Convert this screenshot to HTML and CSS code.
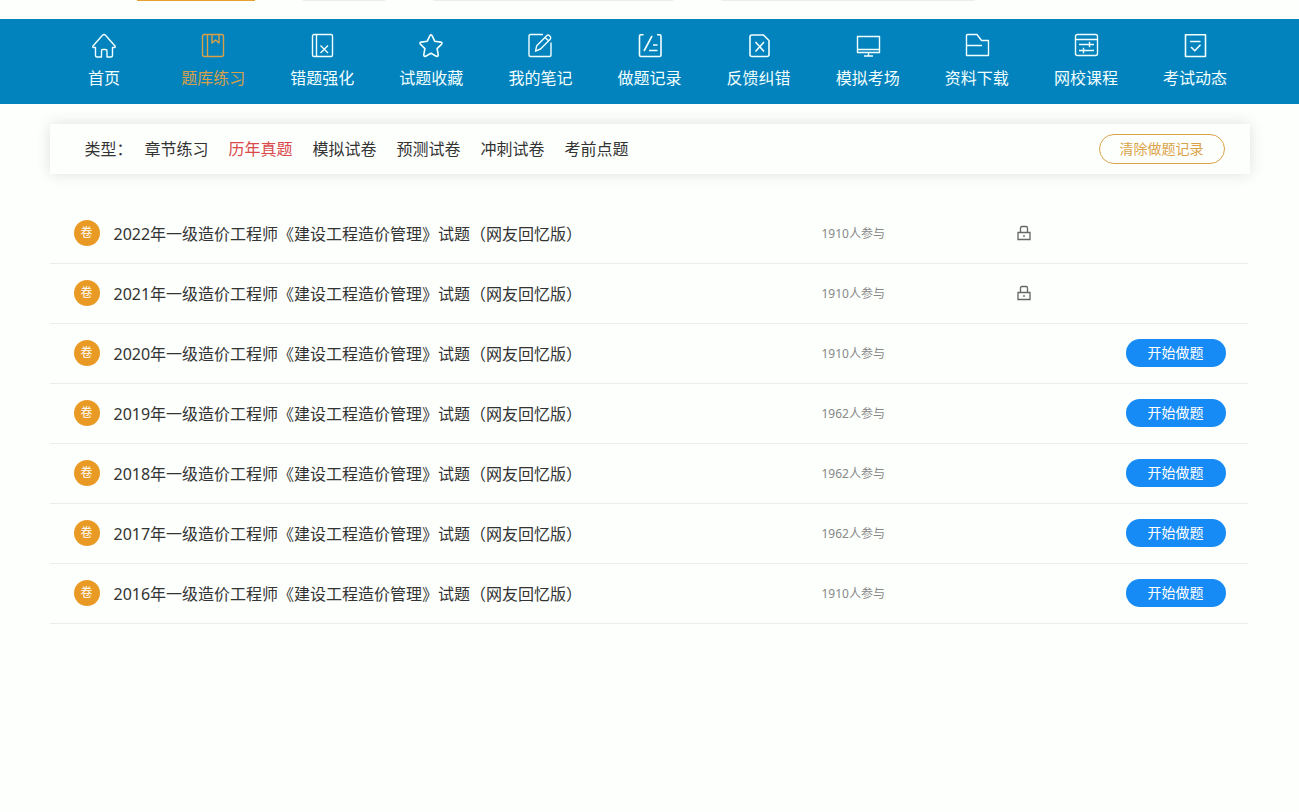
FILE: index.html
```html
<!DOCTYPE html>
<html lang="zh-CN">
<head>
<meta charset="utf-8">
<meta name="viewport" content="width=device-width, initial-scale=1">
<title>题库练习</title>
<link rel="stylesheet" href="styles.css">
</head>
<body>
<div class="top-strip">
  <div class="container top-edges">
    <span class="edge edge-active"></span>
    <span class="edge edge-small"></span>
    <span class="edge edge-medium"></span>
    <span class="edge edge-large"></span>
  </div>
</div>
<nav class="main-nav">
  <div class="container nav-list">
    <a class="nav-item" href="#"><svg class="nav-icon" viewBox="0 0 26 26"><path d="M4.500 14.500H2.800Q1 14.500 2.200 12.700L11.500 2.300Q13 .9 14.500 2.300L23.800 12.700Q25 14.500 23.200 14.500H21.500V22.500Q21.500 24 20 24H16V18Q16 16.500 14.500 16.500H11.500Q10.500 16.500 10.500 18V24H6Q4.500 24 4.500 22.500Z"/></svg><span>首页</span></a>
    <a class="nav-item active" href="#"><svg class="nav-icon" viewBox="0 0 26 26"><rect x="2.500" y="1.500" width="21" height="22" rx="2"/><path d="M7.500 1.500V23.500M12 1.500V10L15.500 7L19 10V1.500"/></svg><span>题库练习</span></a>
    <a class="nav-item" href="#"><svg class="nav-icon" viewBox="0 0 26 26"><rect x="3.500" y="1.500" width="20" height="22" rx="1.500"/><path d="M7.500 1.500V23.500M11.500 12.500L19 20M19 12.500L11.500 20"/></svg><span>错题强化</span></a>
    <a class="nav-item" href="#"><svg class="nav-icon" viewBox="0 0 26 26"><path class="bold" d="M11.800 2.800Q13 .8 14.200 2.800L16.700 8.200L22.800 9.100Q24.900 9.700 23.400 11.400L19.100 15.600L20.200 21.700Q20.300 24 18.300 23.200L13 20.300L7.700 23.200Q5.700 24 5.800 21.700L6.900 15.600L2.600 11.400Q1.100 9.700 3.200 9.100L9.300 8.200Z"/></svg><span>试题收藏</span></a>
    <a class="nav-item" href="#"><svg class="nav-icon" viewBox="0 0 26 26"><path d="M16 1.500H3.500Q2 1.500 2 3V22Q2 23.500 3.500 23.500H22.500Q24 23.500 24 22V9.500M8.500 18.200L9.700 12.800L19.700 2.700Q21 1.500 22.500 2.700L23.200 3.500Q24.400 4.900 23.200 6.200L13.500 16Z M18 4.500L21.600 7.800"/></svg><span>我的笔记</span></a>
    <a class="nav-item" href="#"><svg class="nav-icon" viewBox="0 0 26 26"><path class="bold" d="M6.500 1.800H4Q2.500 1.800 2.500 3.300V22Q2.500 23.500 4 23.500H22.500Q24 23.500 24 22V3.300Q24 1.800 22.500 1.800H20M15 3L7 18M16 12H20.500M12 17.500H20.500"/></svg><span>做题记录</span></a>
    <a class="nav-item" href="#"><svg class="nav-icon" viewBox="0 0 26 26"><path class="bold" d="M6 2H17.500L23 7.500V21.500Q23 23.500 21 23.500H6Q4 23.500 4 21.500V4Q4 2 6 2ZM9.500 9L18 18.500M18 9L9.500 18.500"/></svg><span>反馈纠错</span></a>
    <a class="nav-item" href="#"><svg class="nav-icon" viewBox="0 0 26 26"><path d="M2.500 3.500H24.500V19.500H2.500ZM2.500 16.500H24.500M13.500 19.500V22.500M9 23H18"/></svg><span>模拟考场</span></a>
    <a class="nav-item" href="#"><svg class="nav-icon" viewBox="0 0 26 26"><path d="M2.500 2.500Q2.500 1.500 3.500 1.500H13L17.500 7.500H24.500V22.500H2.500ZM2.500 12.500H18"/></svg><span>资料下载</span></a>
    <a class="nav-item" href="#"><svg class="nav-icon" viewBox="0 0 26 26"><rect x="2.500" y="1.500" width="22" height="21" rx="2"/><path d="M2.500 6.500H24.500M6 11.500H21M16.500 8.800V14.200M6 17.500H21M10.500 14.800V20.200"/></svg><span>网校课程</span></a>
    <a class="nav-item" href="#"><svg class="nav-icon" viewBox="0 0 26 26"><path class="bold" d="M3.500 1.800H23.500V23.500H3.500ZM8 8.500H18.500M9 14L12.800 17.800L18.500 11.800"/></svg><span>考试动态</span></a>
  </div>
</nav>
<main class="container">
  <section class="filter-panel">
    <span class="filter-label">类型：</span>
    <div class="filter-options">
      <a class="filter-link" href="#">章节练习</a>
      <a class="filter-link selected" href="#">历年真题</a>
      <a class="filter-link" href="#">模拟试卷</a>
      <a class="filter-link" href="#">预测试卷</a>
      <a class="filter-link" href="#">冲刺试卷</a>
      <a class="filter-link" href="#">考前点题</a>
    </div>
    <button class="clear-button" type="button">清除做题记录</button>
  </section>
  <ul class="paper-list">
    <li class="paper"><span class="badge">卷</span><a class="paper-title" href="#">2022年一级造价工程师《建设工程造价管理》试题（网友回忆版）</a><span class="paper-count">1910人参与</span><span class="paper-lock"><svg class="lock-icon" viewBox="0 0 16 16" role="img" aria-label="未解锁"><path d="M2 7.500H14V14.500H2ZM4.500 7.500V3Q4.500 1.500 6 1.500H10Q11.500 1.500 11.500 3V7.500M8 10V12"/></svg></span><span class="paper-action"></span></li>
    <li class="paper"><span class="badge">卷</span><a class="paper-title" href="#">2021年一级造价工程师《建设工程造价管理》试题（网友回忆版）</a><span class="paper-count">1910人参与</span><span class="paper-lock"><svg class="lock-icon" viewBox="0 0 16 16" role="img" aria-label="未解锁"><path d="M2 7.500H14V14.500H2ZM4.500 7.500V3Q4.500 1.500 6 1.500H10Q11.500 1.500 11.500 3V7.500M8 10V12"/></svg></span><span class="paper-action"></span></li>
    <li class="paper"><span class="badge">卷</span><a class="paper-title" href="#">2020年一级造价工程师《建设工程造价管理》试题（网友回忆版）</a><span class="paper-count">1910人参与</span><span class="paper-lock"></span><span class="paper-action"><button class="start-button" type="button">开始做题</button></span></li>
    <li class="paper"><span class="badge">卷</span><a class="paper-title" href="#">2019年一级造价工程师《建设工程造价管理》试题（网友回忆版）</a><span class="paper-count">1962人参与</span><span class="paper-lock"></span><span class="paper-action"><button class="start-button" type="button">开始做题</button></span></li>
    <li class="paper"><span class="badge">卷</span><a class="paper-title" href="#">2018年一级造价工程师《建设工程造价管理》试题（网友回忆版）</a><span class="paper-count">1962人参与</span><span class="paper-lock"></span><span class="paper-action"><button class="start-button" type="button">开始做题</button></span></li>
    <li class="paper"><span class="badge">卷</span><a class="paper-title" href="#">2017年一级造价工程师《建设工程造价管理》试题（网友回忆版）</a><span class="paper-count">1962人参与</span><span class="paper-lock"></span><span class="paper-action"><button class="start-button" type="button">开始做题</button></span></li>
    <li class="paper"><span class="badge">卷</span><a class="paper-title" href="#">2016年一级造价工程师《建设工程造价管理》试题（网友回忆版）</a><span class="paper-count">1910人参与</span><span class="paper-lock"></span><span class="paper-action"><button class="start-button" type="button">开始做题</button></span></li>
  </ul>
</main>
</body>
</html>
```
FILE: styles.css
```css
* {
  box-sizing: border-box;
}

body {
  margin: 0;
  background: #fcfffc;
  color: #333;
  font-family: "Noto Sans", "Noto Sans CJK SC", sans-serif;
  font-size: 16px;
  line-height: 24px;
}

a {
  color: inherit;
  text-decoration: none;
}

button {
  font-family: inherit;
  cursor: pointer;
}

.container {
  max-width: 1200px;
  margin: 0 auto;
}

/* Lower edges of the header controls above the navigation */
.top-strip {
  height: 19px;
}

.top-edges {
  display: flex;
  gap: 48px;
  padding-left: 87px;
}

.edge {
  height: 1px;
  background: #ebedeb;
}

.edge-active {
  width: 118px;
  background: #e5a02f;
}

.edge-small {
  width: 82px;
}

.edge-medium {
  width: 240px;
}

.edge-large {
  width: 254px;
}

.main-nav {
  background: #0383bd;
}

.nav-list {
  display: flex;
}

.nav-item {
  flex: 1;
  display: flex;
  flex-direction: column;
  align-items: center;
  gap: 7px;
  padding: 14px 0;
  color: #f2ffff;
  white-space: nowrap;
}

.nav-item.active {
  color: #d9a048;
}

.nav-icon {
  width: 26px;
  height: 26px;
  fill: none;
  stroke: currentColor;
  stroke-width: 1.4;
  stroke-linejoin: round;
}

.nav-icon .bold {
  stroke-width: 1.6;
}

.filter-panel {
  display: flex;
  align-items: center;
  margin-top: 20px;
  padding: 10px 25px 10px 35px;
  background: #fdfffd;
  box-shadow: 0 0 14px rgba(0, 0, 0, 0.12);
}

.filter-options {
  display: flex;
  flex: 1;
  gap: 20px;
  margin-left: 12px;
}

.filter-link.selected {
  color: #d9494a;
}

.clear-button {
  height: 30px;
  padding: 0 20px;
  border: 1px solid #dba349;
  border-radius: 15px;
  background: transparent;
  color: #dba349;
  font-size: 14px;
  line-height: 28px;
}

.paper-list {
  margin: 30px 2px 0 0;
  padding: 0;
  list-style: none;
}

.paper {
  display: flex;
  align-items: center;
  height: 60px;
  padding: 0 22px 1px 24px;
  border-bottom: 1px solid #eceeec;
}

.badge {
  width: 26px;
  height: 26px;
  margin-right: 14px;
  border-radius: 50%;
  background: #e99a25;
  color: #fff;
  font-size: 12px;
  line-height: 26px;
  text-align: center;
}

.paper-title,
.paper-count {
  padding-top: 2px;
}

.paper-title {
  flex: 1;
}

.paper-count {
  width: 194px;
  color: #888;
  font-size: 12px;
}

.paper-lock {
  display: flex;
  width: 110px;
}

.lock-icon {
  width: 16px;
  height: 16px;
  fill: none;
  stroke: #666;
  stroke-width: 1.3;
}

.paper-action {
  width: 100px;
}

.start-button {
  display: block;
  width: 100%;
  height: 28px;
  padding: 0;
  border: 0;
  border-radius: 14px;
  background: #168bf5;
  color: #fff;
  font-size: 14px;
  line-height: 28px;
}
```
